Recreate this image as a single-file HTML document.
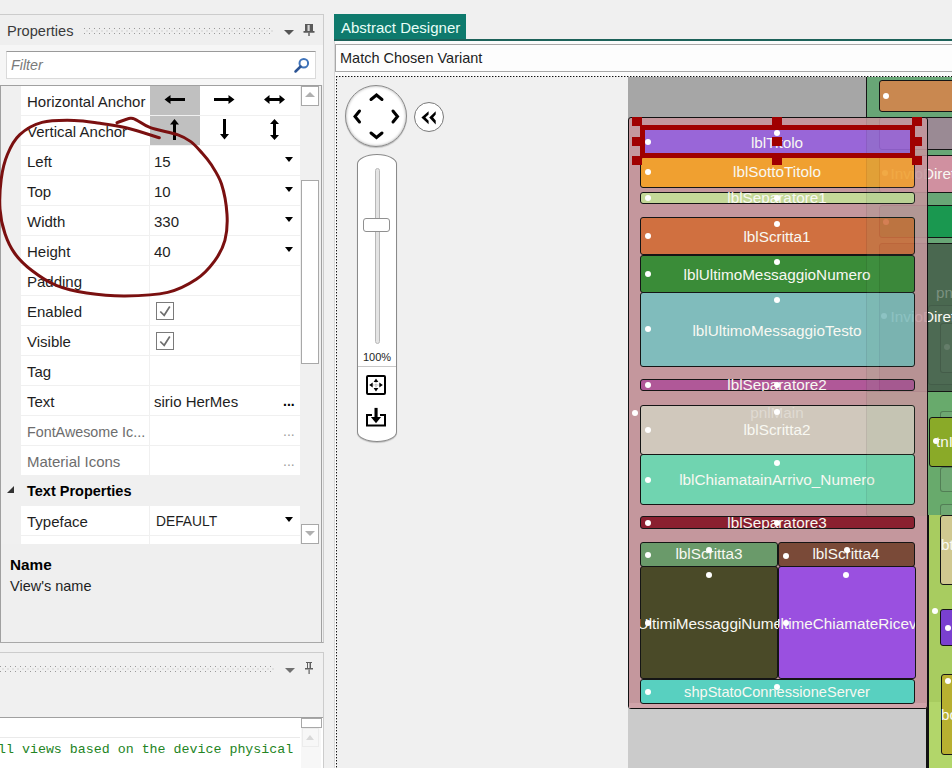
<!DOCTYPE html>
<html><head><meta charset="utf-8">
<style>
*{margin:0;padding:0;box-sizing:border-box}
html,body{width:952px;height:768px;overflow:hidden;background:#f0f0f0;font-family:"Liberation Sans",sans-serif;position:relative}
.a{position:absolute}
.t{position:absolute;white-space:nowrap;line-height:1}
.row{position:absolute;left:21px;width:279px;height:30px;background:#fff;border-bottom:1px solid #f0f0f0}
.row .n{position:absolute;left:6px;top:8.3px;font-size:15px;line-height:1;color:#1e1e1e;white-space:nowrap}
.row .v{position:absolute;left:128px;top:0;width:151px;height:29px;border-left:1px solid #f0f0f0}
.row .vt{position:absolute;left:4px;top:8.3px;font-size:15px;line-height:1;color:#1e1e1e;white-space:nowrap}
.dd{position:absolute;left:135px;top:11px;width:0;height:0;border-left:4.5px solid transparent;border-right:4.5px solid transparent;border-top:5.5px solid #000}
.cb{position:absolute;left:6px;top:6px;width:18px;height:18px;border:1px solid #7a7a7a;background:#fff}
.comp{position:absolute;border:1px solid #151515;border-radius:3px}
.lbl{position:absolute;color:#f8f8f2;font-size:15.3px;white-space:nowrap;line-height:1;text-align:center}
.clip{position:absolute;overflow:hidden}
.dot{position:absolute;width:6px;height:6px;border-radius:3px;background:#fff}
.h{position:absolute;width:10px;height:9px;background:#a00000}
</style></head><body>
<!-- ============ LEFT PANEL ============ -->
<div class="a" style="left:0;top:14px;width:324px;height:629px;border-top:1px solid #cccccc;border-right:1px solid #cccccc;border-bottom:1px solid #a8a8a8;background:#efefef"></div>
<div class="a" style="left:0;top:45px;width:323px;height:40px;background:#f6f6f6"></div>
<div class="t" style="left:7px;top:24px;font-size:14.6px;color:#3a3a3a">Properties</div>
<svg class="a" style="left:84px;top:28px" width="190" height="7" ><defs><pattern id="g28" width="5" height="5" patternUnits="userSpaceOnUse"><rect x="0" y="0" width="1" height="1" fill="#9a9a9a"/><rect x="2.5" y="2.5" width="1" height="1" fill="#b4b4b4"/></pattern></defs><rect x="0" y="0" width="190" height="7" fill="url(#g28)"/></svg>
<div class="a" style="left:284px;top:30px;width:0;height:0;border-left:5px solid transparent;border-right:5px solid transparent;border-top:5px solid #555"></div>
<svg class="a" style="left:303px;top:23px" width="12" height="14" viewBox="0 0 12 14"><path d="M2 1h8v7h1.5v1.8h-11V8H2z" fill="#5a5a5a"/><rect x="4.5" y="2" width="2.2" height="6" fill="#d8d8d8"/><rect x="5.3" y="9.5" width="1.4" height="3.5" fill="#5a5a5a"/></svg>

<!-- Filter -->
<div class="a" style="left:6px;top:51px;width:310px;height:28px;background:#fff;border:1px solid #dadada;border-top-color:#9a9a9a"></div>
<div class="t" style="left:11px;top:58px;font-size:14.3px;color:#7a7a7a;font-style:italic">Filter</div>
<svg class="a" style="left:290px;top:55px" width="20" height="20" viewBox="0 0 20 20"><circle cx="13.8" cy="8.2" r="4.3" fill="none" stroke="#3f74bb" stroke-width="2"/><line x1="10.6" y1="11.5" x2="5.5" y2="16.5" stroke="#2c5494" stroke-width="2.5" stroke-linecap="round"/></svg>

<!-- Grid -->
<div class="a" style="left:0;top:85px;width:322px;height:459px;border:1px solid #a0a0a0;border-bottom:0;background:#f0f0f0"></div>
<div class="a" style="left:321px;top:544px;width:1px;height:98px;background:#a0a0a0"></div>
<div class="a" style="left:0;top:544px;width:1px;height:98px;background:#a0a0a0"></div>

<div class="row" style="top:86px"><div class="n">Horizontal Anchor</div></div>
<div class="row" style="top:116px"><div class="n">Vertical Anchor</div></div>
<div class="row" style="top:146px"><div class="n">Left</div><div class="v"><div class="vt">15</div><div class="dd"></div></div></div>
<div class="row" style="top:176px"><div class="n">Top</div><div class="v"><div class="vt">10</div><div class="dd"></div></div></div>
<div class="row" style="top:206px"><div class="n">Width</div><div class="v"><div class="vt">330</div><div class="dd"></div></div></div>
<div class="row" style="top:236px"><div class="n">Height</div><div class="v"><div class="vt">40</div><div class="dd"></div></div></div>
<div class="row" style="top:266px"><div class="n">Padding</div><div class="v"></div></div>
<div class="row" style="top:296px"><div class="n">Enabled</div><div class="v"><div class="cb"><svg style="position:absolute;left:0;top:0" width="16" height="16" viewBox="0 0 16 16"><path d="M3.3 8.5L7.2 12.3L12.8 3.5" fill="none" stroke="#6e6e6e" stroke-width="1.7"/></svg></div></div></div>
<div class="row" style="top:326px"><div class="n">Visible</div><div class="v"><div class="cb"><svg style="position:absolute;left:0;top:0" width="16" height="16" viewBox="0 0 16 16"><path d="M3.3 8.5L7.2 12.3L12.8 3.5" fill="none" stroke="#6e6e6e" stroke-width="1.7"/></svg></div></div></div>
<div class="row" style="top:356px"><div class="n">Tag</div><div class="v"></div></div>
<div class="row" style="top:386px"><div class="n">Text</div><div class="v"><div class="vt">sirio HerMes</div><div class="t" style="left:133px;top:8px;font-size:14px;font-weight:bold;color:#000">...</div></div></div>
<div class="row" style="top:416px"><div class="n" style="color:#6d6d6d;font-size:14.3px;top:8.8px">FontAwesome Ic...</div><div class="v"><div class="t" style="left:133px;top:8px;font-size:14px;color:#a0a0a0">...</div></div></div>
<div class="row" style="top:446px"><div class="n" style="color:#6d6d6d">Material Icons</div><div class="v"><div class="t" style="left:133px;top:8px;font-size:14px;color:#a0a0a0">...</div></div></div>
<div class="t" style="left:27px;top:484px;font-size:14.5px;font-weight:bold;color:#000">Text Properties</div>
<div class="a" style="left:7px;top:486px;width:0;height:0;border-left:7px solid transparent;border-bottom:7px solid #333"></div>
<div class="row" style="top:506px"><div class="n">Typeface</div><div class="v"><div class="vt" style="font-size:13.8px;top:9.3px;left:6px">DEFAULT</div><div class="dd"></div></div></div>
<div class="row" style="top:536px;height:8px;border-bottom:0"><div class="v" style="height:8px"></div></div>

<!-- anchor cells -->
<div class="a" style="left:150px;top:86px;width:50px;height:29px;background:#c0c0c0"></div>
<div class="a" style="left:150px;top:116px;width:50px;height:29px;background:#c0c0c0"></div>
<svg class="a" style="left:150px;top:86px" width="150" height="60" viewBox="0 0 150 60" fill="#000">
<path d="M14.5 13.5L20.5 9V12H35V15H20.5V18Z"/>
<path d="M84.5 13.5L78.5 9V12H64V15H78.5V18Z"/>
<path d="M114 13.5L119.5 9V12H129.5V9L135 13.5L129.5 18V15H119.5V18Z"/>
<path d="M24.5 33L29 38.5H26V54H23V38.5H20Z"/>
<path d="M74.5 53.5L79 48H76V33H73V48H70Z"/>
<path d="M124.5 33L129 38H126V49H129L124.5 54L120 49H123V38H120Z"/>
</svg>

<!-- scrollbar -->
<div class="a" style="left:301px;top:86px;width:18px;height:20px;border:1px solid #a8a8a8;background:#fff"></div>
<div class="a" style="left:305px;top:92px;width:0;height:0;border-left:5px solid transparent;border-right:5px solid transparent;border-bottom:5px solid #b0b0b0"></div>
<div class="a" style="left:301px;top:180px;width:18px;height:184px;border:1px solid #a8a8a8;background:#fff"></div>
<div class="a" style="left:301px;top:524px;width:18px;height:20px;border:1px solid #a8a8a8;background:#fff"></div>
<div class="a" style="left:305px;top:531px;width:0;height:0;border-left:5px solid transparent;border-right:5px solid transparent;border-top:5px solid #b0b0b0"></div>

<!-- description -->
<div class="t" style="left:10px;top:556.5px;font-size:15.3px;font-weight:bold;color:#000">Name</div>
<div class="t" style="left:10px;top:579px;font-size:14.5px;color:#1e1e1e">View's name</div>

<!-- Panel 2 -->
<div class="a" style="left:0;top:652px;width:324px;height:120px;border-top:1px solid #cccccc;border-right:1px solid #cccccc;background:#f0f0f0"></div>
<svg class="a" style="left:0px;top:666px" width="274" height="7" ><defs><pattern id="g666" width="5" height="5" patternUnits="userSpaceOnUse"><rect x="0" y="0" width="1" height="1" fill="#9a9a9a"/><rect x="2.5" y="2.5" width="1" height="1" fill="#b4b4b4"/></pattern></defs><rect x="0" y="0" width="274" height="7" fill="url(#g666)"/></svg>
<div class="a" style="left:285px;top:668px;width:0;height:0;border-left:5px solid transparent;border-right:5px solid transparent;border-top:5px solid #707070"></div>
<svg class="a" style="left:303px;top:661px" width="12" height="14" viewBox="0 0 12 14"><path d="M3 1h6v1h-1v5h2v1.5H2V7h2V2H3z" fill="#606060"/><rect x="5" y="2" width="1.5" height="5" fill="#f0f0f0"/><rect x="5.5" y="8.5" width="1.2" height="4.5" fill="#606060"/></svg>
<div class="a" style="left:0;top:717px;width:323px;height:51px;background:#fff;border-top:1px solid #a0a0a0"></div>
<div class="a" style="left:0;top:737px;width:300px;height:1px;background:#eaeaea"></div>
<div class="t" style="left:-2px;top:742.5px;font-family:'Liberation Mono',monospace;font-size:13.3px;color:#238423">ll views based on the device physical</div>
<div class="a" style="left:301px;top:718px;width:21px;height:10px;border:1px solid #a8a8a8;background:#fff"></div>
<div class="a" style="left:301px;top:728px;width:20px;height:40px;background:#f7f7f7"></div>
<div class="a" style="left:302px;top:728px;width:17px;height:19px;border:1px solid #ececec"></div>
<div class="a" style="left:306px;top:735px;width:0;height:0;border-left:4.5px solid transparent;border-right:4.5px solid transparent;border-bottom:5px solid #d8d8d8"></div>

<!-- ============ DESIGNER ============ -->
<div class="a" style="left:334px;top:14px;width:132px;height:27px;background:#0e7a6d"></div>
<div class="t" style="left:341px;top:20px;font-size:15px;color:#e8fff8">Abstract Designer</div>
<div class="a" style="left:334px;top:39px;width:618px;height:2px;background:#1d625a"></div>
<div class="a" style="left:334px;top:41px;width:618px;height:727px;background:#fbfbfb;border-left:1px solid #d8d8d8"></div>
<div class="a" style="left:335px;top:44px;width:620px;height:28px;background:#fdfdfd;border:1px solid #a8a8a8"></div>
<div class="t" style="left:340px;top:51px;font-size:14.5px;color:#1e1e1e">Match Chosen Variant</div>

<!-- canvas frame -->
<div class="a" style="left:336px;top:76px;width:616px;height:692px;background:#f0f0f0"></div>
<div class="a" style="left:336px;top:76px;width:616px;height:1px;background:repeating-linear-gradient(90deg,#111 0,#111 1px,#999 1px,#999 1.6px,#fafafa 1.6px,#fafafa 3px)"></div>
<div class="a" style="left:336px;top:76px;width:1px;height:692px;background:repeating-linear-gradient(180deg,#111 0,#111 1px,#999 1px,#999 1.6px,#fafafa 1.6px,#fafafa 3px)"></div>


<!-- nav controls -->
<div class="a" style="left:345px;top:85px;width:62px;height:62px;border-radius:31px;background:#fff;border:1px solid #8a8a8a;box-shadow:inset 0 0 3px rgba(0,0,0,0.35),0 1px 1px rgba(0,0,0,0.2)"></div>
<svg class="a" style="left:345px;top:85px" width="62" height="62" viewBox="0 0 62 62"><g fill="none" stroke="#000" stroke-width="3" stroke-linecap="round" stroke-linejoin="miter"><path d="M26 14.5L31.5 10L37 14.5"/><path d="M26 48L31.5 52.5L37 48"/><path d="M14.5 26L10 31.5L14.5 37"/><path d="M48 26L52.5 31.5L48 37"/></g></svg>
<div class="a" style="left:414px;top:102px;width:30px;height:30px;border-radius:15px;background:radial-gradient(circle,#fff 70%,#eee 100%);border:1px solid #7a7a7a"></div>
<svg class="a" style="left:414px;top:102px" width="30" height="30" viewBox="0 0 30 30"><g fill="#000"><path d="M7.4 15.6L14.6 9.2V12.4L11.4 15.6L14.6 18.8V22.2Z"/><path d="M15.2 15.6L21.7 9.2V12.6L19.1 15.6L21.7 18.6V22.4Z"/></g></svg>
<div class="a" style="left:357px;top:154px;width:40px;height:288px;background:#fff;border:1px solid #8a8a8a;border-radius:20px 20px 20px 20px / 10px 10px 10px 10px;box-shadow:0 1px 1px rgba(0,0,0,0.2)"></div>
<div class="a" style="left:375px;top:168px;width:5px;height:176px;border-radius:2.5px;background:#e4e4e4;border:1px solid #b8b8b8"></div>
<div class="a" style="left:363px;top:218px;width:27px;height:14px;border-radius:3px;background:#fff;border:1px solid #909090"></div>
<div class="t" style="left:363px;top:352px;font-size:11px;color:#1e1e1e">100%</div>
<div class="a" style="left:358px;top:366px;width:38px;height:1px;background:#c8c8c8"></div>
<svg class="a" style="left:366px;top:375px" width="20" height="20" viewBox="0 0 20 20"><rect x="1" y="1" width="18" height="18" rx="1" fill="#fff" stroke="#000" stroke-width="2"/><g stroke="#9a9a9a" stroke-width="1.2" stroke-dasharray="1 1"><line x1="10" y1="6.8" x2="10" y2="13.2"/><line x1="6.6" y1="10" x2="13.4" y2="10"/></g><g fill="#000"><path d="M10 3.4L7.6 6.9H12.4Z"/><path d="M10 16.6L7.6 13.1H12.4Z"/><path d="M3.2 10L6.7 7.6V12.4Z"/><path d="M16.8 10L13.3 7.6V12.4Z"/></g></svg>
<svg class="a" style="left:366px;top:407px" width="20" height="20" viewBox="0 0 20 20"><path d="M6 8H1V18.5H19V8H14" fill="none" stroke="#000" stroke-width="2"/><rect x="8.5" y="0.9" width="3.1" height="9.2" fill="#000"/><path d="M4.9 9.9H15.1L10 16.2Z" fill="#000"/></svg>


<div class="a" style="left:628px;top:77px;width:324px;height:691px;background:#cbcbcb"></div>
<div class="a" style="left:628px;top:77px;width:324px;height:626px;background:#a6a6a6"></div>
<div class="a" style="left:866px;top:77px;width:120px;height:41px;background:#68a676;border-left:1px solid #151515;border-bottom:1px solid #151515"></div>
<div class="comp" style="left:879px;top:80px;width:90px;height:32px;background:#c98850;"></div>
<div class="dot" style="left:882.5px;top:92.5px"></div>
<div class="a" style="left:866px;top:118px;width:120px;height:398px;background:#68a676;border-left:1px solid #151515;border-bottom-left-radius:3px"></div>
<div class="comp" style="left:879px;top:117px;width:90px;height:33px;background:#9a8a94;"></div>
<div class="comp" style="left:879px;top:155px;width:90px;height:38px;background:#d090a0;"></div>
<div class="dot" style="left:882.0px;top:170.0px"></div>
<div class="t" style="left:890.6px;top:166.2px;font-size:15.3px;color:#f8f8f2">InvioDiretto</div>
<div class="comp" style="left:879px;top:205px;width:90px;height:33px;background:#1a9850;"></div>
<div class="dot" style="left:882.5px;top:219.0px"></div>
<div class="comp" style="left:879px;top:243px;width:90px;height:149px;background:#4a6850;"></div>
<div class="t" style="left:936.0px;top:285.0px;font-size:15.3px;color:rgba(255,255,255,0.28)">pnlInvio</div>
<div class="comp" style="left:928px;top:305px;width:60px;height:80px;background:rgba(255,255,255,0.02);border-color:rgba(0,0,0,0.12)"></div>
<div class="comp" style="left:940px;top:323px;width:40px;height:50px;background:rgba(255,255,255,0.02);border-color:rgba(0,0,0,0.15)"></div>
<div class="dot" style="left:944px;top:344px;background:rgba(255,255,255,0.12)"></div>
<div class="dot" style="left:881.4px;top:313.0px"></div>
<div class="t" style="left:890.6px;top:309.0px;font-size:15.3px;color:#f8f8f2">InvioDiretto</div>
<div class="a" style="left:866px;top:391px;width:120px;height:125px;background:#68aa6c;border-top:1px solid #151515;border-left:1px solid #151515;border-bottom-left-radius:3px"></div>
<div class="comp" style="left:940px;top:411px;width:40px;height:50px;background:#6ea872;border-color:rgba(0,0,0,0.25)"></div>
<div class="comp" style="left:940px;top:467px;width:40px;height:25px;background:#6ea872;border-color:rgba(0,0,0,0.25)"></div>
<div class="comp" style="left:940px;top:504px;width:40px;height:20px;background:#6ea872;border-color:rgba(0,0,0,0.25)"></div>
<div class="a" style="left:926px;top:515px;width:26px;height:253px;background:#b2d66a;border-left:3px solid #111"></div>
<div class="a" style="left:929px;top:515px;width:23px;height:187px;background:#a8cc60"></div>
<div class="comp" style="left:940px;top:515px;width:30px;height:70px;background:#d0c890;"></div>
<div class="t" style="left:941.0px;top:536.6px;font-size:15.3px;color:#f8f8f2">btn</div>
<div class="comp" style="left:940px;top:609px;width:30px;height:37px;background:#7a40d0;"></div>
<div class="dot" style="left:944.5px;top:624.5px"></div>
<div class="comp" style="left:941px;top:674px;width:30px;height:81px;background:#b8b030;"></div>
<div class="dot" style="left:945.0px;top:677.5px"></div>
<div class="t" style="left:941.0px;top:706.5px;font-size:15.3px;color:#f8f8f2">bo</div>
<div class="dot" style="left:932.2px;top:608.2px"></div>
<div class="a" style="left:628px;top:117px;width:300px;height:592px;background:#c4979d;border:1px solid #111;border-radius:3px;"></div>
<div class="a" style="left:629px;top:703px;width:297px;height:5px;background:#d0a3a9"></div>
<div class="comp" style="left:640px;top:157px;width:275px;height:31px;background:#f0a030;"></div>
<div class="comp" style="left:640px;top:125px;width:275px;height:33px;background:#9966d8;"></div>
<div class="comp" style="left:640px;top:192px;width:275px;height:12px;background:#c4d898;"></div>
<div class="comp" style="left:640px;top:217px;width:275px;height:38px;background:#d07040;"></div>
<div class="comp" style="left:640px;top:255px;width:275px;height:38px;background:#3a8c38;"></div>
<div class="comp" style="left:640px;top:292px;width:275px;height:75px;background:#80bcbc;"></div>
<div class="comp" style="left:640px;top:379px;width:275px;height:12px;background:#b05898;"></div>
<div class="comp" style="left:640px;top:405px;width:275px;height:50px;background:#d0c8bc;"></div>
<div class="comp" style="left:640px;top:454px;width:275px;height:51px;background:#70d4b0;"></div>
<div class="comp" style="left:640px;top:516px;width:275px;height:13px;background:#8a2030;"></div>
<div class="comp" style="left:640px;top:542px;width:138px;height:25px;background:#6a9a6a;"></div>
<div class="comp" style="left:778px;top:542px;width:137px;height:25px;background:#7a4a38;"></div>
<div class="comp" style="left:640px;top:566px;width:138px;height:113px;background:#4a4a28;"></div>
<div class="comp" style="left:778px;top:566px;width:138px;height:113px;background:#9a50e0;"></div>
<div class="comp" style="left:640px;top:679px;width:275px;height:25px;background:#58d0c0;"></div>
<div class="clip" style="left:640px;top:125px;width:275px;height:33px"><div class="lbl" style="left:-163px;width:600px;top:9.7px;font-size:15.3px;">lblTitolo</div></div>
<div class="clip" style="left:640px;top:158px;width:275px;height:30px"><div class="lbl" style="left:-163px;width:600px;top:6.1px;font-size:15.3px;">lblSottoTitolo</div></div>
<div class="clip" style="left:640px;top:185px;width:275px;height:18px"><div class="lbl" style="left:-163px;width:600px;top:4.7px;font-size:15.3px;">lblSeparatore1</div></div>
<div class="clip" style="left:640px;top:217px;width:275px;height:38px"><div class="lbl" style="left:-163px;width:600px;top:11.7px;font-size:15.3px;">lblScritta1</div></div>
<div class="clip" style="left:640px;top:255px;width:275px;height:38px"><div class="lbl" style="left:-163px;width:600px;top:11.8px;font-size:15.3px;">lblUltimoMessaggioNumero</div></div>
<div class="clip" style="left:640px;top:293px;width:275px;height:74px"><div class="lbl" style="left:-163px;width:600px;top:29.7px;font-size:15.3px;">lblUltimoMessaggioTesto</div></div>
<div class="clip" style="left:640px;top:370px;width:275px;height:21px"><div class="lbl" style="left:-163px;width:600px;top:7.2px;font-size:15.3px;">lblSeparatore2</div></div>
<div class="clip" style="left:640px;top:405px;width:275px;height:50px"><div class="lbl" style="left:-163px;width:600px;top:0.4px;font-size:15.3px;color:rgba(255,255,255,0.35);">pnlMain</div></div>
<div class="clip" style="left:640px;top:405px;width:275px;height:50px"><div class="lbl" style="left:-163px;width:600px;top:17.3px;font-size:15.3px;">lblScritta2</div></div>
<div class="clip" style="left:640px;top:455px;width:275px;height:50px"><div class="lbl" style="left:-163px;width:600px;top:17.2px;font-size:15.3px;">lblChiamatainArrivo_Numero</div></div>
<div class="clip" style="left:640px;top:508px;width:275px;height:21px"><div class="lbl" style="left:-163px;width:600px;top:7.2px;font-size:15.3px;">lblSeparatore3</div></div>
<div class="clip" style="left:640px;top:542px;width:138px;height:25px"><div class="lbl" style="left:-231px;width:600px;top:4.0px;font-size:15.3px;">lblScritta3</div></div>
<div class="clip" style="left:778px;top:542px;width:137px;height:25px"><div class="lbl" style="left:-232px;width:600px;top:4.0px;font-size:15.3px;">lblScritta4</div></div>
<div class="clip" style="left:640px;top:567px;width:138px;height:112px"><div class="lbl" style="left:-231px;width:600px;top:48.7px;font-size:15.3px;">lblUltimiMessaggiNumero</div></div>
<div class="clip" style="left:778px;top:567px;width:137px;height:112px"><div class="lbl" style="left:-232px;width:600px;top:48.7px;font-size:15.3px;">lblUltimeChiamateRicevute</div></div>
<div class="clip" style="left:640px;top:679px;width:275px;height:25px"><div class="lbl" style="left:-163px;width:600px;top:5.6px;font-size:14.6px;">shpStatoConnessioneServer</div></div>
<div class="a" style="left:866px;top:117px;width:61px;height:591px;overflow:hidden;opacity:0.1"><div class="a" style="left:-866px;top:-117px;width:952px;height:768px"><div class="a" style="left:866px;top:77px;width:120px;height:41px;background:#68a676;border-left:1px solid #151515;border-bottom:1px solid #151515"></div>
<div class="comp" style="left:879px;top:80px;width:90px;height:32px;background:#c98850;"></div>
<div class="dot" style="left:882.5px;top:92.5px"></div>
<div class="a" style="left:866px;top:118px;width:120px;height:398px;background:#68a676;border-left:1px solid #151515;border-bottom-left-radius:3px"></div>
<div class="comp" style="left:879px;top:117px;width:90px;height:33px;background:#9a8a94;"></div>
<div class="comp" style="left:879px;top:155px;width:90px;height:38px;background:#d090a0;"></div>
<div class="dot" style="left:882.0px;top:170.0px"></div>
<div class="t" style="left:890.6px;top:166.2px;font-size:15.3px;color:#f8f8f2">InvioDiretto</div>
<div class="comp" style="left:879px;top:205px;width:90px;height:33px;background:#1a9850;"></div>
<div class="dot" style="left:882.5px;top:219.0px"></div>
<div class="comp" style="left:879px;top:243px;width:90px;height:149px;background:#4a6850;"></div>
<div class="t" style="left:936.0px;top:285.0px;font-size:15.3px;color:rgba(255,255,255,0.28)">pnlInvio</div>
<div class="comp" style="left:928px;top:305px;width:60px;height:80px;background:rgba(255,255,255,0.02);border-color:rgba(0,0,0,0.12)"></div>
<div class="comp" style="left:940px;top:323px;width:40px;height:50px;background:rgba(255,255,255,0.02);border-color:rgba(0,0,0,0.15)"></div>
<div class="dot" style="left:944px;top:344px;background:rgba(255,255,255,0.12)"></div>
<div class="dot" style="left:881.4px;top:313.0px"></div>
<div class="t" style="left:890.6px;top:309.0px;font-size:15.3px;color:#f8f8f2">InvioDiretto</div>
<div class="a" style="left:866px;top:391px;width:120px;height:125px;background:#68aa6c;border-top:1px solid #151515;border-left:1px solid #151515;border-bottom-left-radius:3px"></div>
<div class="comp" style="left:940px;top:411px;width:40px;height:50px;background:#6ea872;border-color:rgba(0,0,0,0.25)"></div>
<div class="comp" style="left:940px;top:467px;width:40px;height:25px;background:#6ea872;border-color:rgba(0,0,0,0.25)"></div>
<div class="comp" style="left:940px;top:504px;width:40px;height:20px;background:#6ea872;border-color:rgba(0,0,0,0.25)"></div>
</div></div>
<div class="a" style="left:640px;top:125px;width:275px;height:33px;border:5px solid #a00000;border-bottom-width:5px"></div>
<div class="h" style="left:632px;top:117px"></div>
<div class="h" style="left:632px;top:137px"></div>
<div class="h" style="left:632px;top:156px"></div>
<div class="h" style="left:772px;top:117px"></div>
<div class="h" style="left:772px;top:137px"></div>
<div class="h" style="left:772px;top:156px"></div>
<div class="h" style="left:912px;top:117px"></div>
<div class="h" style="left:912px;top:137px"></div>
<div class="h" style="left:912px;top:156px"></div>
<div class="dot" style="left:644.5px;top:138.6px"></div>
<div class="dot" style="left:774.0px;top:129.5px"></div>
<div class="dot" style="left:644.5px;top:169.0px"></div>
<div class="dot" style="left:644.5px;top:195.0px"></div>
<div class="dot" style="left:774.0px;top:195.0px"></div>
<div class="dot" style="left:644.5px;top:233.0px"></div>
<div class="dot" style="left:774.4px;top:221.4px"></div>
<div class="dot" style="left:644.5px;top:271.0px"></div>
<div class="dot" style="left:774.4px;top:259.0px"></div>
<div class="dot" style="left:644.5px;top:326.0px"></div>
<div class="dot" style="left:774.4px;top:296.6px"></div>
<div class="dot" style="left:644.5px;top:382.0px"></div>
<div class="dot" style="left:774.4px;top:382.0px"></div>
<div class="dot" style="left:632.4px;top:409.5px"></div>
<div class="dot" style="left:774.3px;top:409.3px"></div>
<div class="dot" style="left:644.5px;top:427.0px"></div>
<div class="dot" style="left:644.5px;top:477.0px"></div>
<div class="dot" style="left:774.3px;top:459.5px"></div>
<div class="dot" style="left:644.5px;top:520.0px"></div>
<div class="dot" style="left:774.3px;top:520.0px"></div>
<div class="dot" style="left:644.5px;top:551.5px"></div>
<div class="dot" style="left:705.6px;top:546.6px"></div>
<div class="dot" style="left:782.5px;top:552.5px"></div>
<div class="dot" style="left:843.7px;top:546.6px"></div>
<div class="dot" style="left:705.5px;top:571.5px"></div>
<div class="dot" style="left:843.3px;top:571.5px"></div>
<div class="dot" style="left:644.6px;top:620.0px"></div>
<div class="dot" style="left:782.5px;top:620.0px"></div>
<div class="dot" style="left:644.6px;top:688.5px"></div>
<div class="dot" style="left:774.3px;top:683.5px"></div>
<div class="comp" style="left:929px;top:417px;width:40px;height:50px;background:#8aaa28;"></div>
<div class="dot" style="left:933.0px;top:437.5px"></div>
<div class="t" style="left:936.0px;top:434.3px;font-size:15.3px;color:#f8f8f2">tnInvio</div>
<svg class="a" style="left:0;top:0;overflow:visible" width="240" height="310" viewBox="0 0 240 310"><path d="M159.3 137.8 C153.8 136.1 135.9 130.2 126.0 127.8 C116.1 125.4 108.6 124.5 100.0 123.3 C91.4 122.1 83.9 120.6 74.2 120.4 C64.5 120.2 51.1 120.0 42.0 122.4 C32.9 124.8 25.6 129.3 19.8 134.7 C14.0 140.0 10.5 147.1 7.4 154.5 C4.3 161.9 2.4 170.2 1.2 179.3 C-0.0 188.4 -0.6 199.9 0.0 209.0 C0.6 218.1 2.5 226.3 5.0 233.7 C7.5 241.1 10.3 247.3 14.8 253.5 C19.3 259.7 25.2 265.4 32.2 270.8 C39.2 276.2 47.8 282.0 56.9 285.7 C66.0 289.4 75.2 291.3 86.6 293.0 C97.9 294.7 111.5 296.1 125.0 296.0 C138.5 295.9 155.8 295.2 167.7 292.4 C179.6 289.6 188.5 284.5 196.3 279.3 C204.1 274.1 209.7 267.6 214.5 261.1 C219.3 254.6 222.8 248.1 224.9 240.3 C227.0 232.5 227.6 223.7 227.0 214.3 C226.4 204.9 224.2 192.3 221.5 184.0 C218.8 175.7 214.4 169.7 211.0 164.3 C207.6 158.9 204.3 155.5 200.9 151.7 C197.5 147.9 194.6 144.4 190.8 141.6 C187.0 138.8 184.7 137.1 178.0 134.8 C171.3 132.5 157.3 130.2 150.4 127.7 C143.5 125.2 139.9 121.7 136.6 120.1 C133.2 118.5 133.6 117.8 130.3 118.2 C127.0 118.6 119.2 122.0 117.0 122.7" fill="none" stroke="#7a1010" stroke-width="3" stroke-linecap="round" stroke-linejoin="round"/></svg>
</body></html>
